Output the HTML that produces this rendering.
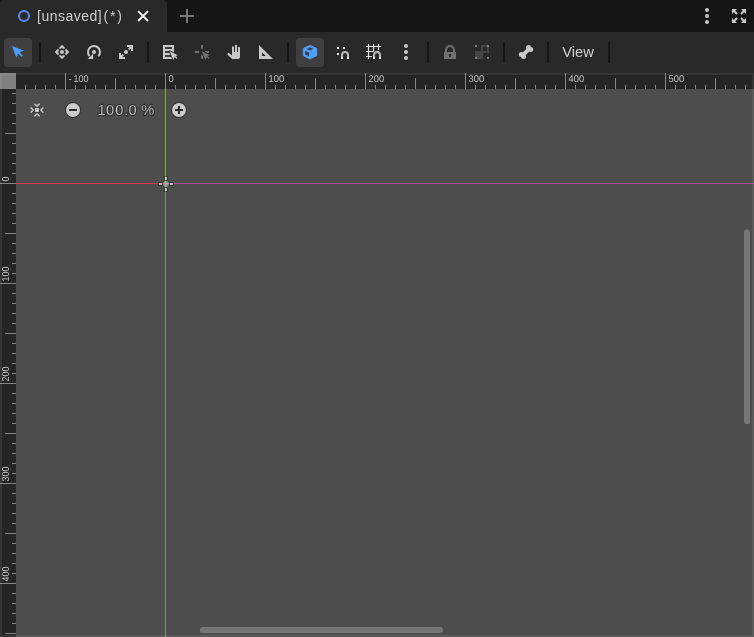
<!DOCTYPE html>
<html><head><meta charset="utf-8"><title>2D editor</title>
<style>
html,body{margin:0;padding:0;}
body{width:754px;height:637px;overflow:hidden;background:#151515;font-family:"Liberation Sans",sans-serif;position:relative;}
.abs{position:absolute;}
.ic{position:absolute;overflow:visible;}
#tab{left:0;top:0;width:167px;height:32px;background:#292929;border-radius:4px 4px 0 0;}
#tabtitle{left:37px;top:0;height:32px;line-height:32px;font-size:14px;color:#cecece;white-space:nowrap;}
#toolbar{left:0;top:32px;width:754px;height:41px;background:#292929;}
.btn{position:absolute;top:38px;width:28px;height:29px;border-radius:4px;background:#404040;}
.sep{position:absolute;top:42px;width:2px;height:21px;background:#171717;}
#view{left:556px;top:38px;width:44px;height:29px;line-height:28px;text-align:center;font-size:14.67px;color:#d0d0d0;}
#vp{left:0;top:73px;width:754px;height:564px;background:#4d4d4d;overflow:hidden;}
#zoomtxt{left:90px;top:100px;width:71px;height:20px;line-height:20px;text-align:center;font-size:14.67px;color:#f2f2f2;-webkit-text-stroke:2px rgba(0,0,0,.45);paint-order:stroke fill;white-space:nowrap;}
#root{position:absolute;left:0;top:0;width:754px;height:637px;will-change:transform;}
</style></head><body><div id="root">

<div id="tab" class="abs"></div>
<svg class="ic" style="left:16px;top:8px" width="16" height="16" viewBox="0 0 16 16" ><circle cx="8" cy="8" r="5" fill="none" stroke="#5b8df0" stroke-width="2"/></svg>
<div id="tabtitle" class="abs"><span style="letter-spacing:.5px">[unsaved]</span><span style="letter-spacing:1.8px;margin-left:1.3px">(*)</span></div>
<svg class="ic" style="left:135px;top:8px" width="16" height="16" viewBox="0 0 16 16" ><path d="M3.1 3.1 13 13M3.1 13 13 3.1" stroke="#f0f0f0" stroke-width="2" fill="none"/></svg>
<svg class="ic" style="left:179px;top:8px" width="16" height="16" viewBox="0 0 16 16" ><path d="M7 1v6H1v2h6v6h2V9h6V7H9V1z" fill="#7a7a7a"/></svg>
<svg class="ic" style="left:699px;top:8px" width="16" height="16" viewBox="0 0 16 16" ><circle cx="8" cy="2" r="2" fill="#c8c8c8"/><circle cx="8" cy="8" r="2" fill="#c8c8c8"/><circle cx="8" cy="14" r="2" fill="#c8c8c8"/></svg>
<svg class="ic" style="left:731px;top:8px" width="16" height="16" viewBox="0 0 16 16" ><path fill="#c8c8c8" d="M1 1v5l1.793-1.793 2.5 2.5 1.414-1.414-2.5-2.5L6 1zm9 0 1.793 1.793-2.5 2.5 1.414 1.414 2.5-2.5L15 6V1zM5.293 9.293l-2.5 2.5L1 10v5h5l-1.793-1.793 2.5-2.5zm5.414 0-1.414 1.414 2.5 2.5L10 15h5v-5l-1.793 1.793z"/></svg>
<div id="toolbar" class="abs"></div>
<div class="btn" style="left:4px"></div>
<div class="btn" style="left:296px"></div>
<div class="sep" style="left:39px"></div>
<div class="sep" style="left:147px"></div>
<div class="sep" style="left:287px"></div>
<div class="sep" style="left:427px"></div>
<div class="sep" style="left:503px"></div>
<div class="sep" style="left:547px"></div>
<div class="sep" style="left:608px"></div>
<svg class="ic" style="left:10px;top:44px" width="16" height="16" viewBox="0 0 16 16" ><path fill="#4e9eff" d="M1.9 1.9 6.3 13.6 8.2 9.5 11.7 13 13 11.7 9.5 8.2 13.7 6.5z"/></svg>
<svg class="ic" style="left:54px;top:44px" width="16" height="16" viewBox="0 0 16 16" ><g fill="#c8c8c8" stroke="#c8c8c8" stroke-width=".5" stroke-linejoin="round"><path d="M8 0.9 10.9 3.9 9.8 5 8 3.6 6.2 5 5.1 3.9z"/><path d="M8 0.9 10.9 3.9 9.8 5 8 3.6 6.2 5 5.1 3.9z" transform="rotate(90 8 8)"/><path d="M8 0.9 10.9 3.9 9.8 5 8 3.6 6.2 5 5.1 3.9z" transform="rotate(180 8 8)"/><path d="M8 0.9 10.9 3.9 9.8 5 8 3.6 6.2 5 5.1 3.9z" transform="rotate(270 8 8)"/></g><circle cx="8" cy="8" r="2" fill="#c8c8c8"/></svg>
<svg class="ic" style="left:86px;top:44px" width="16" height="16" viewBox="0 0 16 16" ><path d="M12.24 12.24A6 6 0 1 0 3.68 12.17" fill="none" stroke="#c8c8c8" stroke-width="2"/><path d="M1.6 15H7.2V9.7z" fill="#c8c8c8"/><circle cx="8" cy="8" r="2" fill="#c8c8c8"/></svg>
<svg class="ic" style="left:118px;top:44px" width="16" height="16" viewBox="0 0 16 16" ><path fill="#c8c8c8" d="M9 1v2h2.6L9.9 4.7l1.4 1.4L13 4.4V7h2V1zM1 9v6h6v-2H4.4l1.7-1.7-1.4-1.4L3 11.6V9z"/><circle cx="8" cy="8" r="2" fill="#c8c8c8"/></svg>
<svg class="ic" style="left:162px;top:44px" width="16" height="16" viewBox="0 0 16 16" ><path fill="#c8c8c8" d="M1 1h11v14H1z"/><path fill="#0a0a0a" d="M3 3.3h7v1.5H3zM3 7.3h7v1.5H3zM3 11.3h7v1.5H3z"/><path d="M7.7 7.3 11.3 15.9 12.7 12.9 14.7 14.9 15.5 14.1 13.4 12.1 16 11.2z" fill="#c8c8c8" stroke="#292929" stroke-width="1.7" paint-order="stroke" stroke-linejoin="round"/></svg>
<svg class="ic" style="left:194px;top:44px" width="16" height="16" viewBox="0 0 16 16" ><path fill="#707070" d="M7 1h2v4H7zM1 7h4v2H1zM11 7h4v2h-4zM7 11h2v4H7z"/><path d="M7.7 7.3 11.3 15.9 12.7 12.9 14.7 14.9 15.5 14.1 13.4 12.1 16 11.2z" fill="#707070" stroke="#292929" stroke-width="1.7" paint-order="stroke" stroke-linejoin="round"/></svg>
<svg class="ic" style="left:226px;top:44px" width="16" height="16" viewBox="0 0 16 16" ><g fill="#c8c8c8"><rect x="6" y="2.2" width="2" height="8" rx="1"/><rect x="9" y="0.8" width="2" height="9" rx="1"/><rect x="12" y="2.8" width="2" height="8" rx="1"/><path d="M6 8h8v5a2 2 0 0 1-2 2H7.5a2 2 0 0 1-1.5-.7z"/><path d="M2.6 10.1 7 14" stroke="#c8c8c8" stroke-width="2.4" stroke-linecap="round"/></g></svg>
<svg class="ic" style="left:258px;top:44px" width="16" height="16" viewBox="0 0 16 16" ><path fill="#c8c8c8" fill-rule="evenodd" d="M1 1v14h14zM4 8.2 7.8 12H4z"/></svg>
<svg class="ic" style="left:302px;top:44px" width="16" height="16" viewBox="0 0 16 16" ><path fill="#4e9eff" stroke="#4e9eff" stroke-width="1" stroke-linejoin="round" d="M8 1.4 14.7 4.5v7.1L8 14.9 1.3 11.6V4.5z"/><path fill="#404040" d="M8 3.2 11.2 4.9 8 6.6 4.8 4.9zM3.1 7 7 8.6v3.6L3.1 10.5z"/></svg>
<svg class="ic" style="left:334px;top:44px" width="16" height="16" viewBox="0 0 16 16" ><path fill="#e8e8e8" d="M3 3v2h2V3zm6 0v2h2V3zM3 9v2h2V9z"/><path d="M11 7a4 4 0 0 0-4 4v4h2v-4a2 2 0 0 1 4 0v4h2v-4a4 4 0 0 0-4-4z" fill="#b8b8b8"/><path d="M7 13v2h2v-2zm6 0v2h2v-2z" fill="#f4f4f4"/></svg>
<svg class="ic" style="left:366px;top:44px" width="16" height="16" viewBox="0 0 16 16" ><path d="M2.5 0V15M7.5 0V7.5M12.5 0V6M0 2.5H15M0 7.5H7.5M0 12.5H6" stroke="#e0e0e0" stroke-width="1.2" fill="none"/><path d="M11 7a4 4 0 0 0-4 4v4h2v-4a2 2 0 0 1 4 0v4h2v-4a4 4 0 0 0-4-4z" fill="#b8b8b8"/><path d="M7 13v2h2v-2zm6 0v2h2v-2z" fill="#f4f4f4"/></svg>
<svg class="ic" style="left:398px;top:44px" width="16" height="16" viewBox="0 0 16 16" ><circle cx="8" cy="2" r="2" fill="#c8c8c8"/><circle cx="8" cy="8" r="2" fill="#c8c8c8"/><circle cx="8" cy="14" r="2" fill="#c8c8c8"/></svg>
<svg class="ic" style="left:442px;top:44px" width="16" height="16" viewBox="0 0 16 16" ><path fill="#707070" fill-rule="evenodd" d="M8 1a5 5 0 0 0-5 5v2H2v7h12V8h-1V6a5 5 0 0 0-5-5zm0 2a3 3 0 0 1 3 3v2H5V6a3 3 0 0 1 3-3zM7 10h2v3H7z"/></svg>
<svg class="ic" style="left:474px;top:44px" width="16" height="16" viewBox="0 0 16 16" ><path fill="#464646" fill-rule="evenodd" d="M7 1v6H1v8h8V9h6V1zm2 2h4v4H9z"/><path fill="#808080" d="M1 1v2h2V1zm12 0v2h2V1zM1 13v2h2v-2zm12 0v2h2v-2z"/></svg>
<svg class="ic" style="left:518px;top:44px" width="16" height="16" viewBox="0 0 16 16" ><g fill="#c8c8c8"><circle cx="10.5" cy="3.4" r="2.5"/><circle cx="12.7" cy="5.6" r="2.5"/><circle cx="3.3" cy="10.4" r="2.5"/><circle cx="5.5" cy="12.6" r="2.5"/><path d="M4.4 11.6 11.6 4.4" stroke="#c8c8c8" stroke-width="3.9"/></g></svg>
<div id="view" class="abs">View</div>
<div id="vp" class="abs">
<svg class="abs" style="left:0;top:0" width="754" height="564" viewBox="0 73 754 564" shape-rendering="crispEdges"><rect x="16" y="183" width="149" height="1" fill="rgb(211,56,81)"/><rect x="165" y="183" width="589" height="1" fill="rgb(167,74,151)"/><rect x="165" y="89" width="1" height="94" fill="rgb(126,190,16)"/><rect x="165" y="183" width="1" height="454" fill="rgb(115,153,113)"/><rect x="0" y="73" width="754" height="16" fill="#252525"/><rect x="0" y="89" width="16" height="548" fill="#252525"/><rect x="25" y="85" width="1" height="4" fill="#858585"/><rect x="35" y="85" width="1" height="4" fill="#858585"/><rect x="45" y="85" width="1" height="4" fill="#858585"/><rect x="55" y="85" width="1" height="4" fill="#858585"/><rect x="65" y="73" width="1" height="16" fill="#858585"/><rect x="75" y="85" width="1" height="4" fill="#858585"/><rect x="85" y="85" width="1" height="4" fill="#858585"/><rect x="95" y="85" width="1" height="4" fill="#858585"/><rect x="105" y="85" width="1" height="4" fill="#858585"/><rect x="115" y="78" width="1" height="11" fill="#858585"/><rect x="125" y="85" width="1" height="4" fill="#858585"/><rect x="135" y="85" width="1" height="4" fill="#858585"/><rect x="145" y="85" width="1" height="4" fill="#858585"/><rect x="155" y="85" width="1" height="4" fill="#858585"/><rect x="165" y="73" width="1" height="16" fill="#858585"/><rect x="175" y="85" width="1" height="4" fill="#858585"/><rect x="185" y="85" width="1" height="4" fill="#858585"/><rect x="195" y="85" width="1" height="4" fill="#858585"/><rect x="205" y="85" width="1" height="4" fill="#858585"/><rect x="215" y="78" width="1" height="11" fill="#858585"/><rect x="225" y="85" width="1" height="4" fill="#858585"/><rect x="235" y="85" width="1" height="4" fill="#858585"/><rect x="245" y="85" width="1" height="4" fill="#858585"/><rect x="255" y="85" width="1" height="4" fill="#858585"/><rect x="265" y="73" width="1" height="16" fill="#858585"/><rect x="275" y="85" width="1" height="4" fill="#858585"/><rect x="285" y="85" width="1" height="4" fill="#858585"/><rect x="295" y="85" width="1" height="4" fill="#858585"/><rect x="305" y="85" width="1" height="4" fill="#858585"/><rect x="315" y="78" width="1" height="11" fill="#858585"/><rect x="325" y="85" width="1" height="4" fill="#858585"/><rect x="335" y="85" width="1" height="4" fill="#858585"/><rect x="345" y="85" width="1" height="4" fill="#858585"/><rect x="355" y="85" width="1" height="4" fill="#858585"/><rect x="365" y="73" width="1" height="16" fill="#858585"/><rect x="375" y="85" width="1" height="4" fill="#858585"/><rect x="385" y="85" width="1" height="4" fill="#858585"/><rect x="395" y="85" width="1" height="4" fill="#858585"/><rect x="405" y="85" width="1" height="4" fill="#858585"/><rect x="415" y="78" width="1" height="11" fill="#858585"/><rect x="425" y="85" width="1" height="4" fill="#858585"/><rect x="435" y="85" width="1" height="4" fill="#858585"/><rect x="445" y="85" width="1" height="4" fill="#858585"/><rect x="455" y="85" width="1" height="4" fill="#858585"/><rect x="465" y="73" width="1" height="16" fill="#858585"/><rect x="475" y="85" width="1" height="4" fill="#858585"/><rect x="485" y="85" width="1" height="4" fill="#858585"/><rect x="495" y="85" width="1" height="4" fill="#858585"/><rect x="505" y="85" width="1" height="4" fill="#858585"/><rect x="515" y="78" width="1" height="11" fill="#858585"/><rect x="525" y="85" width="1" height="4" fill="#858585"/><rect x="535" y="85" width="1" height="4" fill="#858585"/><rect x="545" y="85" width="1" height="4" fill="#858585"/><rect x="555" y="85" width="1" height="4" fill="#858585"/><rect x="565" y="73" width="1" height="16" fill="#858585"/><rect x="575" y="85" width="1" height="4" fill="#858585"/><rect x="585" y="85" width="1" height="4" fill="#858585"/><rect x="595" y="85" width="1" height="4" fill="#858585"/><rect x="605" y="85" width="1" height="4" fill="#858585"/><rect x="615" y="78" width="1" height="11" fill="#858585"/><rect x="625" y="85" width="1" height="4" fill="#858585"/><rect x="635" y="85" width="1" height="4" fill="#858585"/><rect x="645" y="85" width="1" height="4" fill="#858585"/><rect x="655" y="85" width="1" height="4" fill="#858585"/><rect x="665" y="73" width="1" height="16" fill="#858585"/><rect x="675" y="85" width="1" height="4" fill="#858585"/><rect x="685" y="85" width="1" height="4" fill="#858585"/><rect x="695" y="85" width="1" height="4" fill="#858585"/><rect x="705" y="85" width="1" height="4" fill="#858585"/><rect x="715" y="78" width="1" height="11" fill="#858585"/><rect x="725" y="85" width="1" height="4" fill="#858585"/><rect x="735" y="85" width="1" height="4" fill="#858585"/><rect x="745" y="85" width="1" height="4" fill="#858585"/><rect x="12" y="93" width="4" height="1" fill="#858585"/><rect x="12" y="103" width="4" height="1" fill="#858585"/><rect x="12" y="113" width="4" height="1" fill="#858585"/><rect x="12" y="123" width="4" height="1" fill="#858585"/><rect x="5" y="133" width="11" height="1" fill="#858585"/><rect x="12" y="143" width="4" height="1" fill="#858585"/><rect x="12" y="153" width="4" height="1" fill="#858585"/><rect x="12" y="163" width="4" height="1" fill="#858585"/><rect x="12" y="173" width="4" height="1" fill="#858585"/><rect x="0" y="183" width="16" height="1" fill="#858585"/><rect x="12" y="193" width="4" height="1" fill="#858585"/><rect x="12" y="203" width="4" height="1" fill="#858585"/><rect x="12" y="213" width="4" height="1" fill="#858585"/><rect x="12" y="223" width="4" height="1" fill="#858585"/><rect x="5" y="233" width="11" height="1" fill="#858585"/><rect x="12" y="243" width="4" height="1" fill="#858585"/><rect x="12" y="253" width="4" height="1" fill="#858585"/><rect x="12" y="263" width="4" height="1" fill="#858585"/><rect x="12" y="273" width="4" height="1" fill="#858585"/><rect x="0" y="283" width="16" height="1" fill="#858585"/><rect x="12" y="293" width="4" height="1" fill="#858585"/><rect x="12" y="303" width="4" height="1" fill="#858585"/><rect x="12" y="313" width="4" height="1" fill="#858585"/><rect x="12" y="323" width="4" height="1" fill="#858585"/><rect x="5" y="333" width="11" height="1" fill="#858585"/><rect x="12" y="343" width="4" height="1" fill="#858585"/><rect x="12" y="353" width="4" height="1" fill="#858585"/><rect x="12" y="363" width="4" height="1" fill="#858585"/><rect x="12" y="373" width="4" height="1" fill="#858585"/><rect x="0" y="383" width="16" height="1" fill="#858585"/><rect x="12" y="393" width="4" height="1" fill="#858585"/><rect x="12" y="403" width="4" height="1" fill="#858585"/><rect x="12" y="413" width="4" height="1" fill="#858585"/><rect x="12" y="423" width="4" height="1" fill="#858585"/><rect x="5" y="433" width="11" height="1" fill="#858585"/><rect x="12" y="443" width="4" height="1" fill="#858585"/><rect x="12" y="453" width="4" height="1" fill="#858585"/><rect x="12" y="463" width="4" height="1" fill="#858585"/><rect x="12" y="473" width="4" height="1" fill="#858585"/><rect x="0" y="483" width="16" height="1" fill="#858585"/><rect x="12" y="493" width="4" height="1" fill="#858585"/><rect x="12" y="503" width="4" height="1" fill="#858585"/><rect x="12" y="513" width="4" height="1" fill="#858585"/><rect x="12" y="523" width="4" height="1" fill="#858585"/><rect x="5" y="533" width="11" height="1" fill="#858585"/><rect x="12" y="543" width="4" height="1" fill="#858585"/><rect x="12" y="553" width="4" height="1" fill="#858585"/><rect x="12" y="563" width="4" height="1" fill="#858585"/><rect x="12" y="573" width="4" height="1" fill="#858585"/><rect x="0" y="583" width="16" height="1" fill="#858585"/><rect x="12" y="593" width="4" height="1" fill="#858585"/><rect x="12" y="603" width="4" height="1" fill="#858585"/><rect x="12" y="613" width="4" height="1" fill="#858585"/><rect x="12" y="623" width="4" height="1" fill="#858585"/><rect x="5" y="633" width="11" height="1" fill="#858585"/><rect x="0" y="73" width="16" height="16" fill="#808080"/></svg>
<svg class="abs" style="left:0;top:0" width="754" height="564" viewBox="0 73 754 564" font-family="Liberation Sans, sans-serif" font-size="9.8" fill="#c4c4c4"><text transform="translate(68.6,82) rotate(0.03)">-</text><text transform="translate(73.4,82) rotate(0.05) scale(.92,1)">100</text><text transform="translate(168.6,82) rotate(0.05) scale(.95,1)">0</text><text transform="translate(268.6,82) rotate(0.05) scale(.95,1)">100</text><text transform="translate(368.6,82) rotate(0.05) scale(.95,1)">200</text><text transform="translate(468.6,82) rotate(0.05) scale(.95,1)">300</text><text transform="translate(568.6,82) rotate(0.05) scale(.95,1)">400</text><text transform="translate(668.6,82) rotate(0.05) scale(.95,1)">500</text><text transform="translate(9.1,181.5) rotate(-90.05) scale(.9,1)" font-size="10">0</text><text transform="translate(9.1,281.5) rotate(-90.05) scale(.9,1)" font-size="10">100</text><text transform="translate(9.1,381.5) rotate(-90.05) scale(.9,1)" font-size="10">200</text><text transform="translate(9.1,481.5) rotate(-90.05) scale(.9,1)" font-size="10">300</text><text transform="translate(9.1,581.5) rotate(-90.05) scale(.9,1)" font-size="10">400</text></svg>
<svg class="abs" style="left:158px;top:103px" width="16" height="16" viewBox="0 0 16 16" shape-rendering="crispEdges"><path fill="rgba(0,0,0,.27)" fill-rule="evenodd" d="M6 0h4v5H6zM7 1v3h2V1zM6 11h4v5H6zM7 12v3h2v-3zM0 6h5v4H0zM1 7v2h3V7zM11 6h5v4h-5zM12 7v2h3V7z"/><path fill="rgba(255,255,255,.58)" d="M7 1h2v3H7zM7 12h2v3H7zM1 7h3v2H1zM12 7h3v2h-3z"/><circle cx="8" cy="8" r="3.5" fill="rgba(0,0,0,.15)" shape-rendering="auto"/><circle cx="8" cy="8" r="2.9" fill="rgba(255,255,255,.45)" shape-rendering="auto"/></svg>
<svg class="abs" style="left:29px;top:29px" width="16" height="16" viewBox="0 0 16 16"><path d="M5.4 1.6 8 4.2 10.6 1.6M5.4 14.4 8 11.8 10.6 14.4M1.6 5.4 4.2 8 1.6 10.6M14.4 5.4 11.8 8 14.4 10.6" fill="none" stroke="rgba(0,0,0,.22)" stroke-width="3"/><rect x="5.3" y="5.3" width="5.4" height="5.4" fill="rgba(0,0,0,.22)"/><path d="M5.4 1.6 8 4.2 10.6 1.6M5.4 14.4 8 11.8 10.6 14.4M1.6 5.4 4.2 8 1.6 10.6M14.4 5.4 11.8 8 14.4 10.6" fill="none" stroke="#c6c6c6" stroke-width="1.5"/><rect x="6" y="6" width="4" height="4" fill="#c6c6c6"/></svg>
<svg class="abs" style="left:65px;top:29px" width="16" height="16" viewBox="0 0 16 16"><circle cx="8" cy="8" r="7.9" fill="rgba(20,20,20,.55)"/><circle cx="8" cy="8" r="7" fill="#cccccc"/><rect x="4" y="7" width="8" height="2" fill="#2a2a2a"/></svg>
<svg class="abs" style="left:171px;top:29px" width="16" height="16" viewBox="0 0 16 16"><circle cx="8" cy="8" r="7.9" fill="rgba(20,20,20,.55)"/><circle cx="8" cy="8" r="7" fill="#cccccc"/><path d="M4 7h3V4h2v3h3v2H9v3H7V9H4z" fill="#2a2a2a"/></svg>
<svg class="abs" style="left:0;top:0" width="754" height="564" viewBox="0 73 754 564" font-family="Liberation Sans, sans-serif"><g transform="translate(0,115) rotate(0.02)" font-size="14.67"><text x="97.5 106.1 115.3 124.3 128.6 137.8 141.3" fill="none" stroke="rgba(20,20,20,.5)" stroke-width="2.3" stroke-linejoin="round">100.0 %</text><text x="97.5 106.1 115.3 124.3 128.6 137.8 141.3" fill="#f4f4f4" stroke="#3c3c3c" stroke-width=".4">100.0 %</text></g></svg>
<svg class="abs" style="left:0;top:0" width="754" height="564" viewBox="0 73 754 564"><rect x="744" y="229.5" width="6" height="194.7" rx="3" fill="#767676"/><rect x="199.8" y="627" width="243.3" height="6" rx="3" fill="#767676"/></svg>
<div class="abs" style="left:0;top:0;width:750px;height:560px;border:2px solid rgba(255,255,255,.075)"></div>
</div>
</div></body></html>
